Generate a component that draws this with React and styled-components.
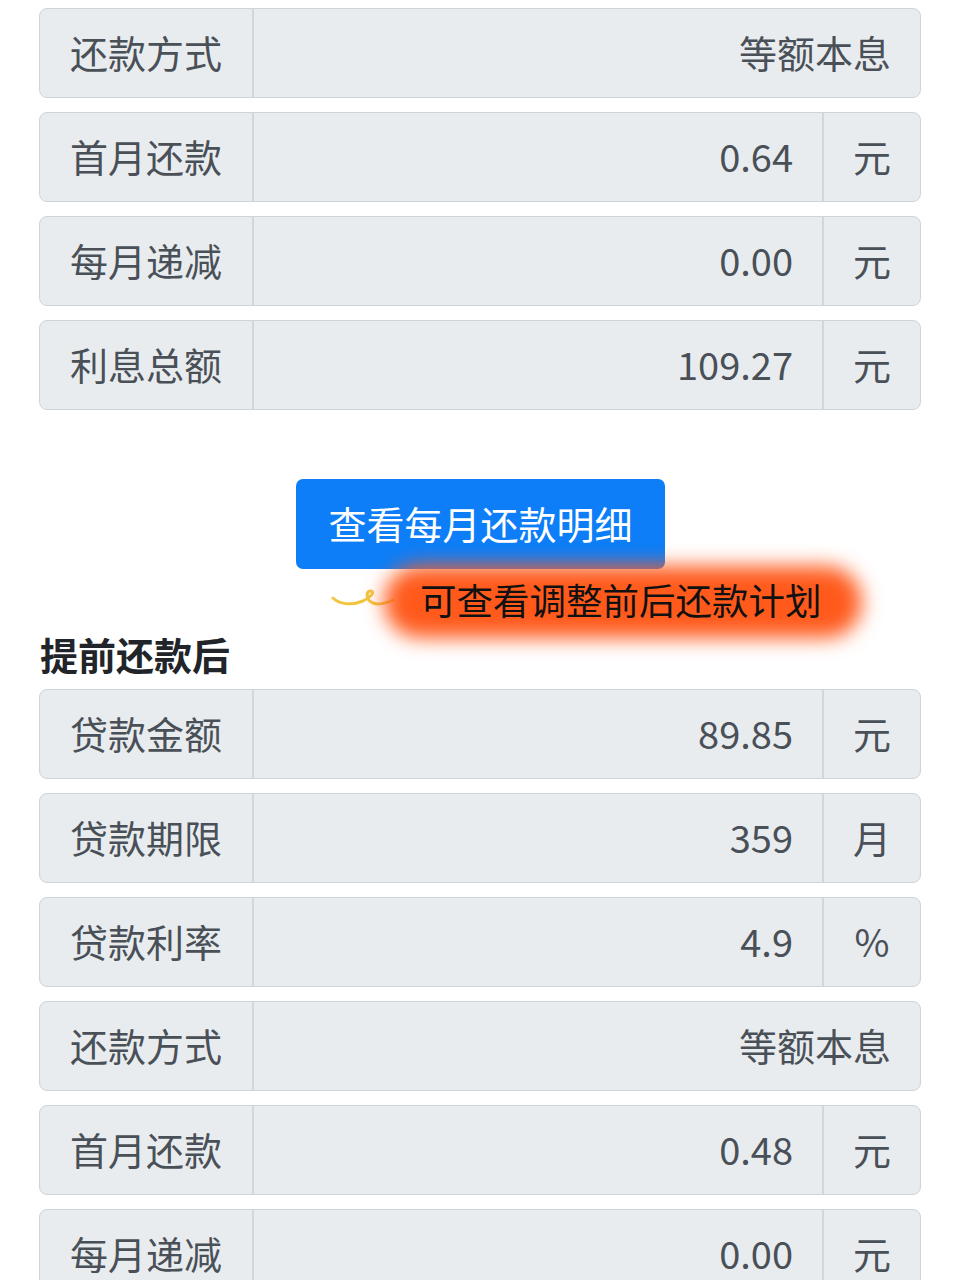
import React from "react";
import styled, { createGlobalStyle } from "styled-components";

const GlobalStyle = createGlobalStyle`
  body {
    margin: 0;
    background: #ffffff;
    font-family: "Noto Sans CJK SC", "Noto Sans", sans-serif;
    color: #495057;
  }
`;

const beforeRows = [
  { label: "还款方式", value: "等额本息" },
  { label: "首月还款", value: "0.64", unit: "元" },
  { label: "每月递减", value: "0.00", unit: "元" },
  { label: "利息总额", value: "109.27", unit: "元" },
];

const afterRows = [
  { label: "贷款金额", value: "89.85", unit: "元" },
  { label: "贷款期限", value: "359", unit: "月" },
  { label: "贷款利率", value: "4.9", unit: "%" },
  { label: "还款方式", value: "等额本息" },
  { label: "首月还款", value: "0.48", unit: "元" },
  { label: "每月递减", value: "0.00", unit: "元" },
];

const Field = ({ label, value, unit }) => (
  <Row>
    <Label>{label}</Label>
    <Value>{value}</Value>
    {unit && <Unit>{unit}</Unit>}
  </Row>
);

const App = () => {
  return (
    <>
      <GlobalStyle />
      <Page>
        <List>
          {beforeRows.map((r, i) => (
            <Field key={i} {...r} />
          ))}
        </List>

        <ButtonArea>
          <DetailButton>查看每月还款明细</DetailButton>
        </ButtonArea>

        <Note>
          <Squiggle viewBox="0 0 64 24">
            <path
              d="M2 10 C 8 16, 20 18, 32 13 C 40 9, 44 4, 40 3 C 35 2, 34 12, 42 15 C 48 17, 56 15, 62 12"
              fill="none"
              stroke="#f1c441"
              strokeWidth="3"
              strokeLinecap="round"
            />
          </Squiggle>
          <Highlight>
            <Blob />
            <NoteText>可查看调整前后还款计划</NoteText>
          </Highlight>
        </Note>

        <Heading>提前还款后</Heading>
        <List>
          {afterRows.map((r, i) => (
            <Field key={i} {...r} />
          ))}
        </List>
      </Page>
    </>
  );
};

export default App;

const Page = styled.div`
  padding: 8px 40px 0 39px;
  height: 1280px;
  box-sizing: border-box;
  overflow: hidden;
`;

const List = styled.div`
  display: flex;
  flex-direction: column;
  gap: 14px;
`;

const Row = styled.div`
  display: flex;
  height: 90px;
  box-sizing: border-box;
  border: 1px solid #ced4da;
  border-radius: 8px;
  background-color: #e9ecef;
  font-size: 38px;
  overflow: hidden;
  padding-bottom: 3px;
`;

const Label = styled.div`
  width: 214px;
  flex-shrink: 0;
  display: flex;
  align-items: center;
  padding-left: 30px;
  box-sizing: border-box;
  border-right: 2px solid #d3d7dc;
  margin-bottom: -3px;
  padding-bottom: 3px;
  color: #495057;
`;

const Value = styled.div`
  flex: 1;
  display: flex;
  align-items: center;
  justify-content: flex-end;
  padding-right: 29px;
  color: #495057;
`;

const Unit = styled.div`
  width: 98px;
  flex-shrink: 0;
  display: flex;
  align-items: center;
  justify-content: center;
  border-left: 2px solid #d3d7dc;
  margin-bottom: -3px;
  padding-bottom: 3px;
  box-sizing: border-box;
  color: #495057;
`;

const ButtonArea = styled.div`
  display: flex;
  justify-content: center;
  margin-top: 69px;
`;

const DetailButton = styled.button`
  width: 369px;
  height: 90px;
  border: none;
  border-radius: 7px;
  background-color: #0d7ef7;
  color: #ffffff;
  font-family: "Noto Sans CJK SC", sans-serif;
  font-size: 38px;
  padding: 0 0 4px;
  margin-left: 1px;
`;

const Note = styled.div`
  display: flex;
  align-items: center;
  height: 62px;
  padding-left: 292px;
`;

const Squiggle = styled.svg`
  width: 64px;
  height: 24px;
  flex-shrink: 0;
`;

const Highlight = styled.div`
  position: relative;
  margin-left: 25px;
  display: flex;
  align-items: center;
`;

const Blob = styled.div`
  position: absolute;
  left: -36px;
  right: -40px;
  top: -10px;
  bottom: -14px;
  border-radius: 40px;
  background: #ff5a1c;
  filter: blur(10px);
`;

const NoteText = styled.span`
  position: relative;
  font-size: 36.5px;
  color: #111111;
  line-height: 48px;
`;

const Heading = styled.h2`
  margin: 0 0 12px 1px;
  font-size: 38px;
  line-height: 46px;
  font-weight: 700;
  color: #212529;
`;
